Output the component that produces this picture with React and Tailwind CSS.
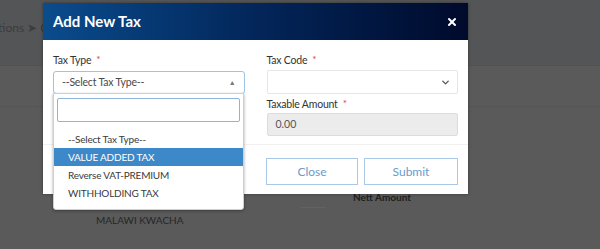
import { X, ChevronDown } from "lucide-react";

const font = { fontFamily: "Lato, 'Noto Sans', sans-serif" };

const Label = ({ children }) => (
	<div className="flex items-start gap-[5px] text-[10.5px] leading-[13px] tracking-[-0.2px] text-[#333]">
		<span>{children}</span>
		<span className="text-[10px] leading-[10px] text-[#e53935]">*</span>
	</div>
);

const options = ["--Select Tax Type--", "VALUE ADDED TAX", "Reverse VAT-PREMIUM", "WITHHOLDING TAX"];

export default function App() {
	return (
		<div className="relative h-[249px] w-[600px] overflow-hidden bg-[#5a5a5a]" style={font}>
			{/* Page behind the overlay */}
			<div className="flex h-[66px] items-center border-b border-[#525252] bg-[#545557] pb-[10px]">
				<span className="-ml-[2px] whitespace-nowrap text-[12px] text-[#3c3c3c]">tions ➤ C</span>
			</div>
			<div className="h-[41px] border-b border-[#555]"></div>
			<div className="h-[83px]"></div>
			<div className="flex">
				<div className="w-[353px]"></div>
				<span className="text-[10px] font-bold text-[#1e1e1e]">Nett Amount</span>
			</div>
			<div className="ml-[300px] mt-[2px] h-px w-[26px] bg-[#626262]"></div>
			<div className="ml-[96px] mt-[5px] text-[10px] text-[#262626]">MALAWI KWACHA</div>

			{/* Modal */}
			<div className="absolute left-[43px] top-[3px] w-[425px] bg-white shadow-[0_0_3px_rgba(0,0,0,0.4)]">
				<div className="flex h-[37px] items-center justify-between bg-gradient-to-r from-[#0b4c8d] via-[#03265a] to-[#000a2c] pl-[10px] pr-[10px]">
					<span className="text-[15px] font-bold text-white">Add New Tax</span>
					<X size={12} strokeWidth={4} className="text-white" />
				</div>
				<div className="grid grid-cols-2 gap-x-[22px] border-b border-[#f0f0f0] px-[10px] pt-[14px] pb-[8px]">
					<div className="flex flex-col gap-[4px]">
						<Label>Tax Type</Label>
						<div className="flex h-[23px] items-center justify-between rounded-[3px] border border-[#9ec3e8] px-[8px] text-[10.5px] tracking-[-0.2px] text-[#4a4a4a]">
							<span>--Select Tax Type--</span>
							<span className="text-[7px] text-[#777]">▲</span>
						</div>
					</div>
					<div className="flex flex-col">
						<Label>Tax Code</Label>
						<div className="mt-[3px] flex h-[24px] items-center justify-end rounded-[2px] border border-[#e6e6e6] px-[6px]">
							<ChevronDown size={11} strokeWidth={3} className="text-[#555]" />
						</div>
						<div className="mt-[4px]">
							<Label>Taxable Amount</Label>
						</div>
						<div className="mt-[2px] flex h-[23px] items-center rounded-[2px] border border-[#dcdcdc] bg-[#ececec] px-[8px] text-[10.5px] text-[#555]">
							0.00
						</div>
					</div>
				</div>
				<div className="flex justify-end gap-[6px] px-[10px] pt-[13px] pb-[9px]">
					<button className="h-[27px] w-[92px] border border-[#a9c9e8] text-[12px] text-[#6a9bcc]">Close</button>
					<button className="h-[27px] w-[94px] border border-[#a9c9e8] text-[12px] text-[#6a9bcc]">Submit</button>
				</div>
			</div>

			{/* Open dropdown */}
			<div className="absolute left-[53px] top-[93px] w-[191px] rounded-b-[3px] border border-[#cfcfcf] bg-white pb-[7px] shadow-[0_1px_3px_rgba(0,0,0,0.35)]">
				<div className="px-[3px] pt-[4px] pb-[8px]">
					<div className="h-[24px] rounded-[2px] border border-[#8fb4da]"></div>
				</div>
				{options.map((o, i) => (
					<div
						key={o}
						className={
							i === 1
								? "flex h-[18px] items-center bg-[#3c88c8] px-[14px] text-[10px] tracking-[-0.2px] text-white"
								: "flex h-[18px] items-center px-[14px] text-[10px] tracking-[-0.2px] text-[#3a3a3a]"
						}
					>
						{o}
					</div>
				))}
			</div>
		</div>
	);
}
